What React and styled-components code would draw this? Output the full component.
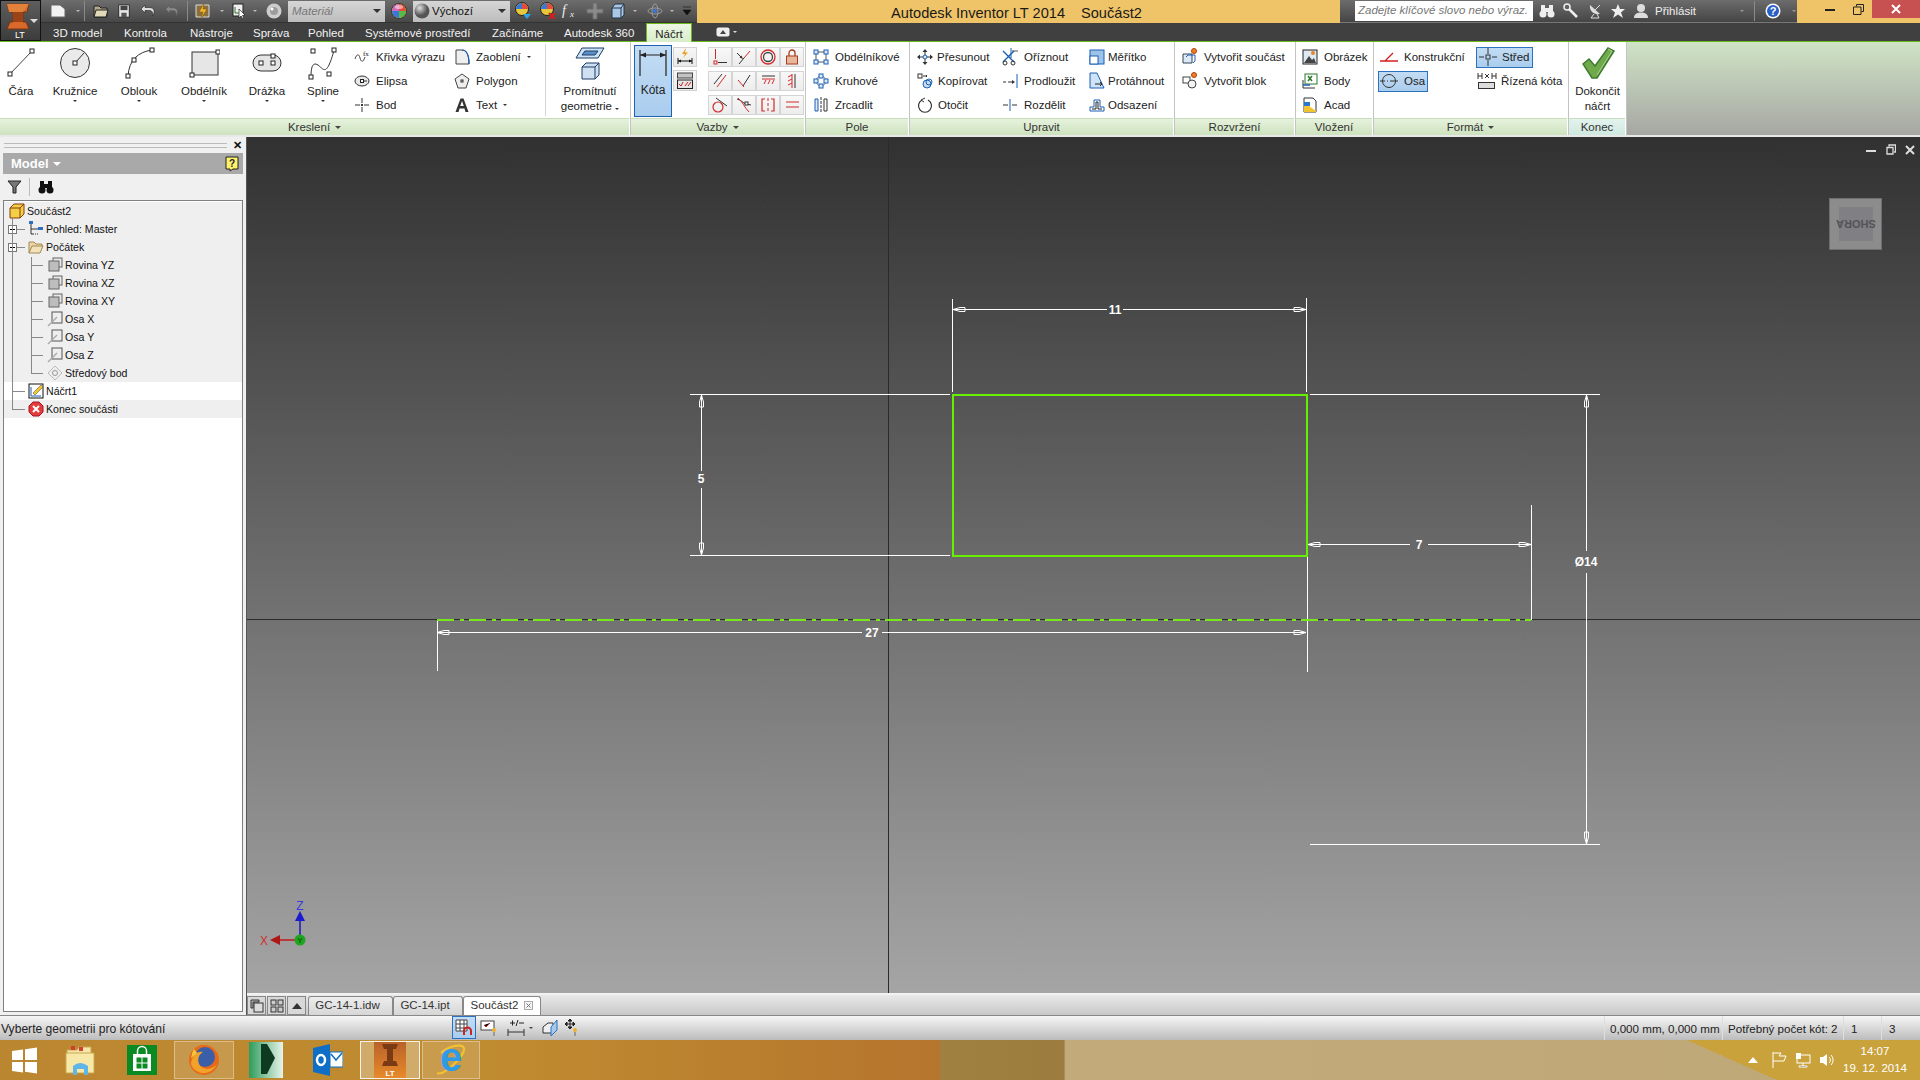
import React from 'react';
import styled, { createGlobalStyle } from 'styled-components';

const Global = createGlobalStyle`
  html, body { margin: 0; padding: 0; background: #404040; }
  * { box-sizing: border-box; }
`;
const F = `"Liberation Sans", Arial, sans-serif`;

const Root = styled.div`
  position: relative; width: 1920px; height: 1080px; overflow: hidden;
  display: flex; flex-direction: column;
  font: 11.5px ${F}; color: #222;
`;
const LogoBox = styled.div`
  position: absolute; left: 0; top: 0; width: 41px; height: 41px; z-index: 2;
  background: linear-gradient(#5e5e5e, #3c3c3c); border: 1px solid #111;
`;
const LogoText = styled.span`
  position: absolute; bottom: 0; left: 14px; color: #fff; font: 9px ${F};
`;
const LogoArrow = styled.span`
  position: absolute; left: 29px; top: 18px; width: 0; height: 0;
  border-left: 4px solid transparent; border-right: 4px solid transparent; border-top: 4px solid #ddd;
`;
const TitleRow = styled.div`
  height: 23px; display: flex; background: #efc468; padding-left: 41px;
`;
const Qat = styled.div`
  width: 656px; display: flex; align-items: center; padding-left: 4px;
  background: linear-gradient(#6d6d6d, #474747);
  border-bottom: 1px solid #333;
`;
const QItem = styled.div`
  width: ${p => p.$w || 24}px; height: 22px; flex: none;
  display: flex; align-items: center; justify-content: center;
`;
const QSep = styled.div`
  width: 1px; height: 20px; background: #8a8a8a; flex: none;
`;
const QCombo = styled.div`
  width: ${p => p.$w}px; height: 21px; flex: none; display: flex; align-items: center; gap: ${p => (p.$muted ? 3 : 2)}px;
  padding: 0 4px 0 ${p => (p.$muted ? 4 : 1)}px; background: linear-gradient(#d6d6d6, #bdbdbd);
  color: ${p => (p.$muted ? '#777' : '#111')}; font: ${p => (p.$muted ? 'italic' : 'normal')} 11.5px ${F};
`;
const ComboArrow = styled.span`
  margin-left: auto; width: 0; height: 0;
  border-left: 4px solid transparent; border-right: 4px solid transparent; border-top: 4px solid #333;
`;
const Caret = styled.span`
  display: inline-block; width: 0; height: 0; flex: none;
  border-left: ${p => p.$s || 2}px solid transparent; border-right: ${p => p.$s || 2}px solid transparent;
  border-top: ${p => p.$s || 2}px solid ${p => p.$c || '#333'};
`;
const AppTitle = styled.div`
  flex: 1; display: flex; justify-content: center; align-items: center; gap: 16px;
  font: 14.6px ${F}; color: #1a1a1a; padding: 2px 4px 0 0;
`;
const SearchBar = styled.div`
  width: 457px; display: flex; align-items: center; flex: none;
  background: linear-gradient(#6c6c6c, #454545);
  border-bottom: 1px solid #777;
`;
const SearchBox = styled.div`
  width: 178px; height: 20px; margin-left: 15px; background: #fff; flex: none;
  padding: 3px 3px; color: #777; font: italic 11.5px ${F}; white-space: nowrap; margin-right: 2px;
`;
const SignIn = styled.span` color: #eee; font: 11.5px ${F}; width: 82px; margin-left: 3px; `;
const WinControls = styled.div`
  width: 123px; display: flex; justify-content: flex-end; align-items: flex-start;
`;
const WinBtn = styled.div`
  width: ${p => p.$w}px; height: 18px; display: flex; align-items: center; justify-content: center;
  background: ${p => p.$bg || 'transparent'};
`;
const TabRow = styled.div`
  height: 19px; display: flex; align-items: center; padding-left: 53px; background: #404040;
  border-bottom: 1px solid #6ab81e;
`;
const MenuTab = styled.div`
  width: ${p => p.$w}px; color: ${p => (p.$active ? '#222' : '#f2f2f2')}; font: 11.5px ${F};
  height: 19px; line-height: 20px; flex: none;
  ${p => p.$active && `background: linear-gradient(#eef7e6, #d8edc9); text-align: center; margin-bottom: -1px; border: 1px solid #6ab81e; border-bottom: none;`}
`;
const TabExtra = styled.div`
  display: flex; align-items: center; gap: 3px; margin-left: 24px;
`;
const Ribbon = styled.div`
  height: 95px; display: flex; background: #fff; border-bottom: 2px solid #e8e8e8;
`;
const Group = styled.div`
  width: ${p => p.$w}px; flex: none; display: flex; flex-direction: column;
  border-right: 1px solid #c4c4c4;
`;
const GroupBody = styled.div`
  height: 76px; display: flex; padding-left: ${p => p.$pad || 0}px;
`;
const GroupLabel = styled.div`
  height: 17px; margin-right: 1px; display: flex; align-items: center; justify-content: center; gap: 5px;
  font: 11.5px ${F}; color: #333; border-top: 1px solid #c9dcbc;
  background: ${p => (p.$end ? 'linear-gradient(#e2f3ee, #cfe9df)' : 'linear-gradient(#e6f2dd, #cde2be)')};
`;
const RibbonRest = styled.div`
  flex: 1; background: linear-gradient(#cfe3c6, #a6a7a2);
`;
const Large = styled.div`
  width: ${p => p.$w}px; flex: none; display: flex; flex-direction: column; align-items: center;
  padding-top: 4px; text-align: center; font: 11.5px/15px ${F};
`;
const LargeIcon = styled.div`
  height: 34px; display: flex; align-items: center; justify-content: center; margin-bottom: 4px;
`;
const LargeCaret = styled(Caret)`
  margin-top: 1px;
`;
const Col = styled.div`
  width: ${p => p.$w}px; flex: none; padding-top: 3px; display: flex; flex-direction: column;
`;
const DrawCol = styled(Col)` margin-left: 4px; `;
const Small = styled.div`
  height: 24px; display: flex; align-items: center; gap: ${p => p.$gap ?? 6}px; white-space: nowrap;
`;
const SmallIcon = styled.span`
  width: ${p => p.$w || 16}px; height: 18px; flex: none; display: flex; align-items: center; justify-content: center;
`;
const Toggle = styled.div`
  width: ${p => p.$w}px; height: 21px; display: flex; align-items: center; gap: ${p => p.$gap}px;
  background: linear-gradient(#c3dcf3, #aacdee); border: 1px solid #2a72c0;
`;
const VSep = styled.div`
  width: 1px; height: 72px; margin-top: 2px; background: #d5d5d5; flex: none;
`;
const Kota = styled.div`
  width: 38px; height: 72px; margin: 3px 1px 0 3px; flex: none;
  background: linear-gradient(#c3dcf3, #aacdee); border: 1px solid #1f62b0;
  display: flex; flex-direction: column; align-items: center; padding-top: 4px;
`;
const KotaLabel = styled.span` margin-top: 7px; font: 12px ${F}; `;
const Stack = styled.div`
  width: 24px; flex: none; display: flex; flex-direction: column; gap: 3px; padding-top: 5px;
`;
const StackBtn = styled.div`
  height: ${p => p.$h}px; background: linear-gradient(#f7f7f7, #e9e9e9); border: 1px solid #d2d2d2;
  display: flex; align-items: center; justify-content: center;
`;
const ConstraintGrid = styled.div`
  margin-left: 11px; padding-top: 5px; display: grid;
  grid-template-columns: repeat(4, 24px); grid-auto-rows: 20px; row-gap: 4px;
`;
const Cell = styled.div`
  background: linear-gradient(#f8f8f8, #ececec); border: 1px solid #d4d4d4; display: flex; align-items: center; justify-content: center;
`;

const Work = styled.div`
  flex: 1; display: flex; min-height: 0; background: #e2e2e2;
`;
const Panel = styled.div`
  width: 247px; flex: none; background: #f0f0f0; padding: 0 3px 3px 3px;
  display: flex; flex-direction: column; border-right: 1px solid #555;
`;
const Grip = styled.div`
  height: 16px; display: flex; align-items: center; gap: 6px;
`;
const GripLines = styled.div`
  flex: 1; height: 5px; border-top: 1px solid #bbb; border-bottom: 1px solid #bbb; margin-left: 1px;
`;
const PanelClose = styled.span` font: bold 11px ${F}; color: #111; line-height: 10px; margin-right: 1px; `;
const PanelHead = styled.div`
  height: 21px; background: #a9a9a9; display: flex; align-items: center; gap: 4px; padding: 0 4px 0 8px;
  color: #fff; font: bold 13px ${F};
`;
const HelpTag = styled.span` margin-left: auto; display: flex; `;
const PanelTools = styled.div`
  height: 26px; display: flex; align-items: center; padding-left: 4px;
`;
const ToolSep = styled.div` width: 1px; height: 18px; background: #bbb; margin: 0 8px 0 7px; `;
const Tree = styled.div`
  position: relative; flex: 1; background: #fff; border: 1px solid #7f7f7f; padding-top: 1px;
`;
const TreeRow = styled.div`
  position: relative; height: 18px; display: flex; align-items: center; gap: 2px; z-index: 1;
  padding-left: ${p => 4 + p.$lvl * 19}px;
  background: ${p => (p.$white ? '#fff' : '#efefef')};
  font: 10.6px ${F}; color: #111; white-space: nowrap;
  ${p => p.$lvl > 0 && `&::before { content: ''; position: absolute; top: 9px; left: ${p.$lvl === 1 ? 8 : 27}px; width: ${p.$lvl === 1 ? 13 : 12}px; height: 1px; background: #888; }`}
`;
const TreeLines = styled.div`
  position: absolute; inset: 0; pointer-events: none; z-index: 2;
  &::before { content: ''; position: absolute; left: 8px; top: 17px; height: 191px; width: 1px; background: #888; }
  &::after { content: ''; position: absolute; left: 27px; top: 56px; height: 116px; width: 1px; background: #888; }
`;
const Plus = styled.span`
  position: absolute; left: 4px; top: 5px; width: 9px; height: 9px; background: #fff; border: 1px solid #777; z-index: 3;
  &::before { content: ''; position: absolute; left: 1px; top: 3px; width: 5px; height: 1px; background: #000; }
  ${p => p.$plus && `&::after { content: ''; position: absolute; left: 3px; top: 1px; width: 1px; height: 5px; background: #000; }`}
`;
const TreeIcon = styled.span`
  width: 17px; height: 17px; flex: none; display: flex; align-items: center; justify-content: center; position: relative; z-index: 3;
`;
const ViewCol = styled.div`
  flex: 1; display: flex; flex-direction: column; min-width: 0;
`;
const Canvas = styled.div`
  position: relative; height: 856px; background: linear-gradient(#313131, #a5a5a5);
`;
const Sketch = styled.svg`
  position: absolute; left: 0; top: 0; display: block;
`;
const DocControls = styled.div`
  position: absolute; right: 5px; top: 7px; display: flex; gap: 9px; align-items: center;
`;
const ViewCube = styled.div`
  position: absolute; right: 38px; top: 61px; width: 53px; height: 52px;
  background: #8c8c8c; border: 1px solid #6e6e6e; display: flex; align-items: center; justify-content: center;
`;
const CubeFace = styled.div`
  width: 34px; height: 34px; background: #7f7f84; display: flex; align-items: center; justify-content: center;
  transform: rotate(180deg); color: #545454; font: bold 11px ${F};
`;
const DocTabs = styled.div`
  height: 22px; display: flex; align-items: flex-end;
  background: linear-gradient(#e9e9e9, #c8c8c8); border-top: 2px solid #f2f2f2;
`;
const DocBtn = styled.div`
  width: 19px; height: 19px; margin-right: 1px; flex: none; display: flex; align-items: center; justify-content: center;
  border: 1px solid #888; background: #d8d8d8;
`;
const DocTab = styled.div`
  width: ${p => p.$w}px; height: 19px; flex: none; display: flex; align-items: center; justify-content: center; gap: 6px;
  padding: 0 ${p => (p.$active ? 0 : 6)}px 2px 0; margin-left: ${p => p.$ml || 0}px;
  font: 11.5px ${F}; color: #333; border: 1px solid #888; border-bottom: none;
  border-radius: 3px 3px 0 0;
  background: ${p => (p.$active ? '#fff' : 'linear-gradient(#eee, #d6d6d6)')};
`;
const StatusBar = styled.div`
  height: 25px; display: flex; align-items: stretch;
  background: linear-gradient(#f6f6f6, #bcbcbc); border-top: 1px solid #888;
`;
const StatusText = styled.div`
  width: 452px; flex: none; padding: 2px 0 0 1px; display: flex; align-items: center; font: 12.1px ${F}; color: #222;
`;
const StatusIcon = styled.div`
  width: ${p => p.$w || 24}px; flex: none; height: 23px; display: flex; align-items: center; justify-content: center; gap: 2px;
  ${p => p.$on && 'background: linear-gradient(#c3dcf3, #aacdee); border: 1px solid #2a72c0;'}
`;
const Field = styled.div`
  width: ${p => p.$w}px; flex: none; display: flex; align-items: center; padding-left: ${p => p.$pad || 5}px;
  border-left: 1px solid #dedede; font: 11.6px ${F}; color: #222; white-space: nowrap;
  ${p => p.$first && 'margin-left: auto;'}
`;
const Taskbar = styled.div`
  height: 40px; display: flex; align-items: stretch; gap: 2px;
  background:
    linear-gradient(24deg, transparent 88.4%, #c9a23c 88.4%),
    linear-gradient(90deg, #bb8630 0, #c08c30 25%, #b5752d 48.9%, #a08040 49%, #9c7d3f 55.4%, #c2aa7a 55.5%, #bfa878 100%);
`;
const TaskCell = styled.div`
  width: ${p => p.$w || 60}px; flex: none; margin: 1px 0; display: flex; align-items: center; justify-content: center;
  ${p => p.$hl && 'background: rgba(255,255,255,.14); border: 1px solid rgba(255,255,255,.35);'}
  ${p => p.$active && 'background: rgba(255,255,255,.28); border: 1px solid rgba(255,255,255,.85);'}
`;
const Tray = styled.div`
  margin-left: auto; display: flex; align-items: center; gap: 8px; padding-right: 10px;
`;
const Clock = styled.div`
  width: 70px; margin-left: -3px; text-align: center; color: #fff; font: 11.5px/17px ${F};
`;
const InvBadge = styled.div`
  position: relative; width: 32px; height: 36px; background: linear-gradient(#b8622a, #e88a2a);
  display: flex; justify-content: center;
`;
const InvLT = styled.span` position: absolute; bottom: 0; color: #fff; font: bold 8px ${F}; `;
const IE = styled.span`
  position: relative; width: 34px; height: 34px; display: flex; align-items: center; justify-content: center;
  color: #2f9be6; font: bold 40px/30px ${F}; padding-bottom: 6px;
`;
const IERing = styled.svg` position: absolute; left: 0; top: 0; `;
const IELetter = styled.span` position: relative; `;

const H = ({ x, y }) => <rect x={x - 2} y={y - 2} width="4" height="4" fill="#fff" stroke="#222" />;
const S = ({ w = 16, h = 16, children }) => <svg width={w} height={h} viewBox={`0 0 ${w} ${h}`} fill="none">{children}</svg>;

/* ---------- Large ribbon icons ---------- */
const ILine = () => <S w={30} h={30}><path d="M4 26L26 3" stroke="#444" /><H x={4} y={26} /><H x={26} y={3} /></S>;
const ICircle = () => <S w={32} h={32}><circle cx="16" cy="16" r="14.5" fill="#eaeaea" stroke="#333" /><path d="M16 16L25 6" stroke="#333" /><H x={16} y={16} /></S>;
const IArc = () => <S w={32} h={32}><path d="M5 29C6 13 15 5 29 3" stroke="#333" /><H x={5} y={29} /><H x={11} y={13} /><H x={29} y={3} /></S>;
const IRect = () => <S w={32} h={30}><rect x="4" y="4" width="26" height="23" fill="#e6e6e6" stroke="#333" /><H x={30} y={4} /><H x={4} y={27} /></S>;
const ISlot = () => <S w={32} h={22}><rect x="2" y="3" width="28" height="16" rx="8" fill="#e4e4e4" stroke="#333" /><H x={10} y={11} /><H x={22} y={11} /><H x={22} y={4} /></S>;
const ISpline = () => <S w={32} h={34}><path d="M4 31C4 20 6 16 11 19C16 23 18 27 22 19C25 12 26 8 27 4" stroke="#333" /><H x={4} y={31} /><H x={6} y={5} /><H x={22} y={28} /><H x={27} y={4} /></S>;
const IProject = () => <S w={34} h={36}><path d="M9 3H31L25 13H3Z" fill="#cfe3f6" stroke="#1d3d66" /><path d="M12 6H25L22 10H9Z" fill="#5d90c8" stroke="#1d3d66" /><path d="M9 22l4-4h13v12l-4 4H9Z" fill="#cfe0f0" stroke="#1d3d66" /><path d="M9 22h13v12M22 22l4-4" stroke="#1d3d66" /></S>;
const IKota = () => <S w={30} h={26}><path d="M2 0V26M28 0V26" stroke="#222" strokeWidth="1.2" /><path d="M2 5H28" stroke="#222" /><path d="M2 5l6-2.500v5zM28 5l-6-2.500v5z" fill="#222" /></S>;
const ICheck = () => <S w={36} h={34}><path d="M3 18L9 13L15 20L28 2L34 5L17 32H12Z" fill="#70a84c" stroke="#3f7a32" strokeWidth="1.5" /><path d="M28 3L32 5L17 29" stroke="#a8d48c" /></S>;

/* ---------- Small ribbon icons ---------- */
const IEq = () => <S><path d="M1 10C3 4 5 5 6 9C7 13 9 14 11 8" stroke="#444" /><text x="9" y="7" fontSize="7" fontFamily="Liberation Serif" fill="#222">fx</text></S>;
const IEllipse = () => <S><ellipse cx="8" cy="8" rx="7" ry="5" fill="#e8e8e8" stroke="#333" /><path d="M8 8h5" stroke="#333" /><rect x="6.5" y="6.5" width="3" height="3" fill="#fff" stroke="#222" /></S>;
const IPoint = () => <S><path d="M8 1V6M8 10V15M1 8H6M10 8H15" stroke="#333" /><rect x="7" y="7" width="2" height="2" fill="#333" /></S>;
const IFillet = () => <S h={18}><path d="M2 2H8C12 2 15 6 15 16H2Z" fill="#efefef" stroke="#444" /><path d="M8 2C12 2 15 6 15 16" stroke="#1a5fb4" strokeWidth="1.2" /></S>;
const IPoly = () => <S><path d="M8 1L15 6L12 15H4L1 6Z" fill="#eee" stroke="#444" /><rect x="7" y="7" width="2" height="2" stroke="#333" /></S>;
const IText = () => <S><path d="M1.5 15L6.5 1.5h3L14.5 15h-3l-1-3.5h-5L4.500 15ZM6.200 9h3.600L8 4Z" fill="#333" /></S>;
const IPatRect = () => <S><path d="M4 3H12M3 4V12M13 4V12M4 13H12" stroke="#555" /><g fill="#dce9f6" stroke="#1a5fb4"><rect x="1" y="1" width="4" height="4" /><rect x="11" y="1" width="4" height="4" /><rect x="1" y="11" width="4" height="4" /><rect x="11" y="11" width="4" height="4" /></g></S>;
const IPatCirc = () => <S><circle cx="8" cy="8" r="5" stroke="#888" /><g fill="#dce9f6" stroke="#1a5fb4"><rect x="6" y="1" width="4" height="4" /><rect x="1" y="6" width="4" height="4" /><rect x="11" y="6" width="4" height="4" /><rect x="6" y="11" width="4" height="4" /></g></S>;
const IMirror = () => <S><path d="M8 0V16" stroke="#333" strokeDasharray="3 1" /><path d="M2 2H5V14H2Z" fill="#dce9f6" stroke="#1a5fb4" /><path d="M11 2H14V14H11Z" stroke="#333" /></S>;
const IMove = () => <S><path d="M8 1V15M1 8H15" stroke="#333" /><path d="M8 0l2.500 3h-5zM8 16l2.500-3h-5zM0 8l3-2.500v5zM16 8l-3-2.500v5z" fill="#333" /><circle cx="8" cy="8" r="2" fill="#dce9f6" stroke="#1a5fb4" /></S>;
const ICopy = () => <S><circle cx="10" cy="11" r="4" fill="#c9def3" stroke="#1a5fb4" /><circle cx="12" cy="9" r="3" stroke="#1a5fb4" /><rect x="1" y="1" width="4" height="4" fill="#fff" stroke="#333" /><path d="M6 3h4l-1-1M10 3l-1 1" stroke="#333" /></S>;
const IRotate = () => <S><path d="M5 3A6.500 6.500 0 1 0 11 3" stroke="#333" strokeWidth="1.2" /><path d="M8 1L4 3l3 2" stroke="#333" /></S>;
const ITrim = () => <S h={18}><path d="M1 3L12 14M12 3L1 14" stroke="#1a5fb4" strokeWidth="1.4" /><path d="M9 0V10" stroke="#1a5fb4" /><circle cx="3" cy="15" r="2" stroke="#333" /><circle cx="11" cy="15" r="2" stroke="#333" /><path d="M10 3H16" stroke="#555" /></S>;
const IExtend = () => <S><path d="M1 9H4M6 9H10" stroke="#333" /><path d="M10 7l3 2-3 2z" fill="#333" /><path d="M15 1V15" stroke="#1a5fb4" /></S>;
const ISplit = () => <S><path d="M1 8H6M10 8H15" stroke="#333" /><path d="M8 2V14" stroke="#1a5fb4" /></S>;
const IScale = () => <S h={18}><rect x="1" y="2" width="14" height="14" fill="#9dc3e9" stroke="#1a5fb4" /><rect x="1" y="8" width="8" height="8" fill="#fff" stroke="#1a5fb4" /></S>;
const IStretch = () => <S h={18}><path d="M1 1H8L15 16H1Z" fill="#cfe3f6" stroke="#1a5fb4" /><path d="M6 12H13M11 10l2 2-2 2" stroke="#222" /></S>;
const IOffset = () => <S><path d="M1 14V10H5V3H11V10H15V14Z" stroke="#1a5fb4" /><path d="M3 12H7V5H9V12H13" stroke="#222" /></S>;
const ICreatePart = () => <S h={18}><path d="M1 6H10V15H1Z" fill="#dce9f6" stroke="#345" /><path d="M4 9l2-2h7v6l-2 2" stroke="#1a5fb4" /><circle cx="12" cy="3" r="2.500" fill="#f08020" stroke="#b04010" /></S>;
const ICreateBlock = () => <S h={18}><rect x="1" y="5" width="7" height="6" stroke="#444" /><circle cx="10" cy="12" r="4" fill="#f3f3f3" stroke="#444" /><circle cx="12" cy="3" r="2.500" fill="#f08020" stroke="#b04010" /></S>;
const IImage = () => <S><rect x="1" y="1" width="14" height="14" fill="#dfe9f2" stroke="#222" /><path d="M2 14L7 7L10 11L12 9L14 14Z" fill="#444" /><circle cx="11" cy="4" r="2" fill="#e8832a" /></S>;
const IPoints = () => <S><rect x="3" y="1" width="12" height="10" fill="#fff" stroke="#2a7a2a" /><path d="M6 3l4 5M10 3l-4 5" stroke="#2a7a2a" strokeWidth="1.5" /><path d="M1 7V15H13" stroke="#333" /><path d="M1 12H8" stroke="#1a5fb4" strokeWidth="1.5" /></S>;
const IAcad = () => <S><path d="M2 1H11L14 4V15H2Z" fill="#fff" stroke="#333" /><path d="M2 15V9H7L14 14V15Z" fill="#f2c530" /><rect x="2" y="5" width="6" height="4" fill="#2a78c8" /></S>;
const IConstr = () => <S w={20} h={12}><path d="M1 10H19M6 10L14 2" stroke="#d41f1f" strokeWidth="1.3" /></S>;
const IOsa = () => <S w={20} h={16}><circle cx="10" cy="8" r="6.500" stroke="#333" /><path d="M1 8H6M8 8H9M11 8H19" stroke="#333" /></S>;
const ICenter = () => <S w={20} h={18}><path d="M10 0V6M10 12V18M1 9H6M14 9H19" stroke="#333" /><rect x="8" y="7" width="4" height="4" stroke="#333" /></S>;
const IDriven = () => <S w={20} h={18}><path d="M1 1V7M5 1V7M1 4H5M15 1V7M19 1V7M15 4H19M8 2L12 6M12 2L8 6" stroke="#333" /><rect x="1.500" y="10.500" width="16" height="6" fill="#ddd" stroke="#333" /></S>;
const IAutoDim = () => <S w={18} h={18}><path d="M10 0L6 6H9L7 10L12 4.500H9Z" fill="#e9a020" /><path d="M2 10V16M16 10V16M2 13H16" stroke="#111" /><path d="M2 13l3-1.500v3zM16 13l-3-1.500v3z" fill="#111" /></S>;
const IForms = () => <S w={18} h={18}><rect x="1.500" y="1" width="15" height="5" fill="#c4c4c4" stroke="#444" /><rect x="1.500" y="8" width="15" height="8.500" fill="#e4e4e4" stroke="#222" /><path d="M3 12l2 2 2-4M9 14l3-4M12 14l3-4" stroke="#c22" /></S>;

/* constraint glyphs */
const R = '#d12a2a';
const K = '#333';
const Cons = [
  <g><path d="M3.500 0V10" stroke={R} /><rect x="2" y="12" width="3" height="3" stroke={R} /><path d="M6 13.500H15" stroke={K} /></g>,
  <g><path d="M14 2L8 9" stroke={R} /><path d="M8 9L3 15" stroke={K} /><path d="M1 4L6 9" stroke={K} /><path d="M7 10L3.500 8.500L5.500 6.500Z" fill={K} /></g>,
  <g><circle cx="8" cy="8" r="7" stroke={R} strokeWidth="1.300" /><circle cx="8" cy="8" r="4.500" stroke="#444" strokeWidth="1.300" /></g>,
  <g><rect x="2.500" y="7" width="11" height="8" fill="#e8b79a" stroke="#a83a20" /><path d="M5 7V4a3 3 0 0 1 6 0V7" stroke="#a83a20" strokeWidth="1.300" /></g>,
  <g><path d="M2 11L10 1" stroke={K} /><path d="M5 14L14 2" stroke={R} /></g>,
  <g><path d="M14 2L7 13" stroke={K} /><path d="M2 7L8 14" stroke={R} /></g>,
  <g><path d="M2 3H15" stroke={K} /><path d="M2 6H15" stroke={R} /><path d="M4 11l2-4M8 11l2-4M12 11l2-4" stroke={R} /></g>,
  <g><path d="M11 1V15" stroke={K} /><path d="M8 1V15" stroke={R} /><path d="M4 4l4-2M4 8l4-2M4 12l4-2" stroke={R} /></g>,
  <g><circle cx="6" cy="10" r="5" stroke={R} strokeWidth="1.200" /><path d="M4 1L15 9" stroke={K} /></g>,
  <g><path d="M1 2C5 3 7 6 10 7L15 8" stroke={K} /><path d="M2 1C7 5 8 10 13 15" stroke={R} /><rect x="9" y="5" width="3" height="3" fill="#fff" stroke={K} /></g>,
  <g><path d="M5 2H2V14H5M11 2H14V14H11" stroke={R} strokeWidth="1.200" /><path d="M8 1V15" stroke={R} strokeDasharray="3 2" /></g>,
  <path d="M2 5H15M2 10H15" stroke={R} strokeWidth="1.200" />,
];

/* ---------- QAT icons ---------- */
const QNew = () => <S><path d="M1 2H10L15 6V14H1Z" fill="#f2f2f2" stroke="#666" /></S>;
const QOpen = () => <S><path d="M1 3H6L8 5H14V14H1Z" fill="#b4a98a" stroke="#222" /><path d="M3 7H15L13 14H1Z" fill="#e2d9b8" stroke="#222" /></S>;
const QSave = () => <S><rect x="2" y="1" width="12" height="14" fill="#e6e6e6" stroke="#222" /><rect x="4" y="2" width="8" height="5" fill="#444" /><rect x="5" y="10" width="6" height="5" fill="#555" /></S>;
const QUndo = ({ dim }) => <S><path d="M5 2L1 6L5 10V7.500H9C12 7.500 13 9 13 13C15 9 15 4.500 9 4.500H5Z" fill={dim ? '#8a8a8a' : '#ddd'} stroke={dim ? '#666' : '#222'} strokeWidth=".6" /></S>;
const QUpd = () => <S><path d="M1 2H14V14H1Z" fill="#8a6f3e" stroke="#ddd" /><path d="M9 0L4 9H8L6 16L12 6H8Z" fill="#f2b72a" stroke="#8a5a10" strokeWidth=".6" /></S>;
const QSel = () => <S><rect x="1" y="1" width="10" height="12" fill="#eee" stroke="#222" /><path d="M7 6L7 15L9 13L11 16L12 15L10.500 12.500L13 12Z" fill="#fff" stroke="#222" strokeWidth=".7" /><path d="M3 4V10H7" stroke="#2a7a2a" /></S>;
const QSphere = () => <S><circle cx="8" cy="8" r="7.500" fill="#cdcdcd" /><circle cx="8" cy="8" r="4" fill="#888" opacity=".7" /><circle cx="6" cy="6" r="1.500" fill="#fff" /></S>;
const QWheel = () => <S><circle cx="8" cy="8" r="7.500" fill="#e8c83a" stroke="#333" /><path d="M8 8V1A7 7 0 0 1 15 8Z" fill="#e84a3a" /><path d="M8 8H1A7 7 0 0 1 8 1Z" fill="#d068c0" /><path d="M8 8V15A7 7 0 0 1 1 8Z" fill="#3a78d8" /><path d="M8 8H15A7 7 0 0 1 8 15Z" fill="#58b848" /><ellipse cx="8" cy="4" rx="4" ry="2" fill="#fff" opacity=".5" /></S>;
const QGrey = () => <S><defs><radialGradient id="gs" cx=".35" cy=".3"><stop offset="0" stopColor="#e0e0e0" /><stop offset="1" stopColor="#555" /></radialGradient></defs><circle cx="8" cy="8" r="7.500" fill="url(#gs)" /></S>;
const QColorA = () => <S w={18} h={18}><circle cx="8" cy="7" r="6.500" fill="#e8c83a" stroke="#222" /><path d="M8 7V1A6 6 0 0 1 14 7Z" fill="#e84a3a" /><path d="M8 7H2A6 6 0 0 1 8 1Z" fill="#3a78d8" /><path d="M9 12h8l-4 5z" fill="#2aa3e8" /></S>;
const QColorB = () => <S w={18} h={18}><circle cx="8" cy="7" r="6.500" fill="#e8c83a" stroke="#222" /><path d="M8 7V1A6 6 0 0 1 14 7Z" fill="#e84a3a" /><path d="M8 7H2A6 6 0 0 1 8 1Z" fill="#3a78d8" /><path d="M10 11l6 6M16 11l-6 6" stroke="#d41f1f" strokeWidth="2" /></S>;
const QFx = () => <svg width="20" height="18"><text x="2" y="13" fontFamily="Liberation Serif" fontStyle="italic" fontSize="14" fill="#eee">f</text><text x="10" y="15" fontFamily="Liberation Serif" fontStyle="italic" fontSize="9" fill="#eee">x</text></svg>;
const QPlus = () => <S w={18} h={18}><path d="M7 1H11V7H17V11H11V17H7V11H1V7H7Z" fill="#8a8a8a" stroke="#6a6a6a" /></S>;
const QBox = () => <S><path d="M2 5L5 1H14V12L11 15H2Z" fill="#a9c8e6" stroke="#234" /><path d="M2 5H11V15M11 5L14 1" stroke="#234" /></S>;
const Q3d = () => <S><ellipse cx="8" cy="8" rx="7" ry="3" stroke="#9a9a9a" /><ellipse cx="8" cy="8" rx="3" ry="7" stroke="#9a9a9a" /><circle cx="8" cy="8" r="2" fill="#3a78d8" /></S>;
const QMore = () => <S w={10} h={10}><path d="M1 1H9M1 4H9L5 9Z" fill="#111" stroke="#111" strokeWidth=".6" /></S>;
const QTri = ({ c = '#bbb' }) => <Caret $s={2.5} $c={c} />;

const IBino = ({ c = '#eee' }) => <S><circle cx="4" cy="11" r="3.500" fill={c} /><circle cx="12" cy="11" r="3.500" fill={c} /><rect x="2" y="2" width="4" height="8" fill={c} /><rect x="10" y="2" width="4" height="8" fill={c} /><rect x="6" y="5" width="4" height="4" fill={c} /></S>;
const IKey = () => <S><circle cx="4" cy="4" r="3" stroke="#eee" strokeWidth="1.5" /><path d="M6 6L14 14" stroke="#eee" strokeWidth="2.500" /></S>;
const ISat = () => <S><path d="M3 2C2 8 7 12 13 11Z" fill="#ddd" /><path d="M7 11L4 15H12L10 11" stroke="#ddd" /><path d="M8 7L13 2" stroke="#ddd" /></S>;
const IStar = () => <S><path d="M8 1L10 6H15L11 9.500L13 15L8 11.500L3 15L5 9.500L1 6H6Z" fill="#eee" /></S>;
const IUser = () => <S><circle cx="8" cy="5" r="4" fill="#ddd" /><path d="M1 15C1 11 4 9.500 8 9.500S15 11 15 15Z" fill="#ddd" /></S>;
const IHelp = () => <svg width="16" height="16"><circle cx="8" cy="8" r="7.500" fill="#fff" /><circle cx="8" cy="8" r="6" fill="#2a5fc8" /><text x="8" y="12" textAnchor="middle" fontFamily="Liberation Sans" fontWeight="bold" fontSize="11" fill="#fff">?</text></svg>;

/* ---------- Tree icons ---------- */
const TCube = () => <S><path d="M1 5L5 1H15V11L11 15H1Z" fill="#f3cf45" stroke="#8a3a10" /><path d="M1 5H11V15M11 5L15 1" stroke="#8a3a10" /></S>;
const TView = () => <S><path d="M3 2V13H6M3 8H10" stroke="#333" /><rect x="1" y="0" width="4" height="3" fill="#2a6fc0" /><rect x="10" y="6" width="5" height="3" fill="#2a6fc0" /><path d="M7 13H10" stroke="#333" strokeDasharray="1 1" /></S>;
const TFolder = () => <S><path d="M1 14V3H6L8 5H14V8" fill="#e8d6aa" stroke="#a58a52" /><path d="M1 14L4 7H15L12 14Z" fill="#f1e2bc" stroke="#a58a52" /></S>;
const TPlane = () => <S><rect x="6" y="1" width="9" height="9" stroke="#666" fill="#e8e8e8" /><rect x="2" y="4" width="10" height="10" fill="#bdbdbd" stroke="#666" /></S>;
const TAxis = () => <S><rect x="5" y="1" width="10" height="11" fill="#eee" stroke="#555" /><path d="M1 15L10 6" stroke="#aaa" strokeWidth="1.5" /></S>;
const TPoint = () => <S><path d="M8 1L15 8L8 15L1 8Z" fill="#eee" stroke="#bbb" /><circle cx="8" cy="8" r="2.500" stroke="#999" /></S>;
const TSketch = () => <S><rect x="1" y="1" width="14" height="14" fill="#fff" stroke="#111" /><path d="M3 4V13H13" stroke="#1a5fb4" /><path d="M5 10L13 2L15 4L7 12Z" fill="#f2c530" stroke="#444" strokeWidth=".5" /></S>;
const TEnd = () => <S><path d="M5 1H11L15 5V11L11 15H5L1 11V5Z" fill="#e23c3c" stroke="#a12" /><path d="M5 5L11 11M11 5L5 11" stroke="#fff" strokeWidth="2" /></S>;

const Arrow = ({ d }) => <path d={d} fill="none" stroke="#fff" />;

const DrawSketch = () => (
  <Sketch width="1673" height="856" viewBox="247 137 1673 856">
    <path d="M247 619.500H1920M888.500 137V993" stroke="#2a2a2a" strokeWidth="1" />
    <g stroke="#fff" strokeWidth="1" fill="none" shapeRendering="crispEdges">
      <path d="M952.500 299V392M1306.500 298V392" />
      <path d="M953 309.500H1107M1123 309.500H1306" />
      <path d="M690 394.500H950M1310 394.500H1600M690 555.500H950" />
      <path d="M701.500 395V471M701.500 488V555" />
      <path d="M1307 505V672" />
      <path d="M1307 544.500H1410M1428 544.500H1531" />
      <path d="M1531.500 505V620" />
      <path d="M437.500 620V671" />
      <path d="M437 632.500H862M882 632.500H1306" />
      <path d="M1586.500 395V551M1586.500 573V844" />
      <path d="M1310 844.500H1600" />
    </g>
    <Arrow d="M953 309.500L960 307.500H965V311.500H960ZM1306 309.500L1299 307.500H1294V311.500H1299Z" />
    <Arrow d="M701.500 395L699.500 402V407H703.500V402ZM701.500 555L699.500 548V543H703.500V548Z" />
    <Arrow d="M1308 544.500L1315 542.500H1320V546.500H1315ZM1531 544.500L1524 542.500H1519V546.500H1524Z" />
    <Arrow d="M437 632.500L444 630.500H449V634.500H444ZM1306 632.500L1299 630.500H1294V634.500H1299Z" />
    <Arrow d="M1586.500 395L1584.500 402V407H1588.500V402ZM1586.500 844L1584.500 837V832H1588.500V837Z" />
    <rect x="953" y="395" width="354" height="161" fill="none" stroke="#66f000" strokeWidth="2" />
    <path d="M437 620H1531" stroke="#78e81a" strokeWidth="2" strokeDasharray="17 6 4 5" shapeRendering="crispEdges" />
    <g fill="#fff" fontFamily="Liberation Sans" fontWeight="bold" fontSize="12" textAnchor="middle">
      <text x="1115" y="314">11</text>
      <text x="701" y="483">5</text>
      <text x="1419" y="549">7</text>
      <text x="872" y="637">27</text>
      <text x="1586" y="566">Ø14</text>
    </g>
    <path d="M300 940V918" stroke="#1a1ac0" strokeWidth="1.500" />
    <path d="M300 911L295 921H305Z" fill="#1a1ad0" />
    <path d="M300 940H278" stroke="#c01a1a" strokeWidth="1.500" />
    <path d="M270 940L280 935V945Z" fill="#b01818" />
    <circle cx="300" cy="940" r="5.500" fill="#1fa51f" />
    <text x="300" y="943" textAnchor="middle" fill="#0f6a0f" fontFamily="Liberation Sans" fontWeight="bold" fontSize="8">Y</text>
    <text x="300" y="910" textAnchor="middle" fill="#3a3ae0" fontFamily="Liberation Sans" fontSize="12">Z</text>
    <text x="264" y="945" textAnchor="middle" fill="#d03030" fontFamily="Liberation Sans" fontSize="12">X</text>
  </Sketch>
);

const QatBar = () => (
  <Qat>
    <QItem $w={26}><QNew /></QItem><QItem $w={13}><QTri /></QItem><QSep />
    <QItem $w={32}><QOpen /></QItem><QItem $w={14}><QSave /></QItem><QItem $w={34}><QUndo /></QItem><QItem $w={14}><QUndo dim /></QItem>
    <QItem $w={8} /><QSep />
    <QItem $w={30}><QUpd /></QItem><QItem $w={8}><QTri /></QItem>
    <QItem $w={3} /><QItem $w={22}><QSel /></QItem><QItem $w={8}><QTri /></QItem>
    <QItem $w={29}><QSphere /></QItem>
    <QCombo $w={97} $muted>Materiál<ComboArrow /></QCombo>
    <QItem $w={28}><QWheel /></QItem>
    <QCombo $w={97}><QGrey />Výchozí<ComboArrow /></QCombo>
    <QItem $w={25}><QColorA /></QItem><QItem $w={25}><QColorB /></QItem><QItem $w={20}><QFx /></QItem>
    <QItem $w={3} /><QItem $w={24}><QPlus /></QItem>
    <QItem $w={22}><QBox /></QItem><QItem $w={12}><QTri /></QItem><QItem $w={3} /><QItem $w={22}><Q3d /></QItem><QItem $w={12}><QTri /></QItem><QItem $w={2} /><QItem $w={14}><QMore /></QItem>
  </Qat>
);

const tabs = [['3D model', 71], ['Kontrola', 66], ['Nástroje', 63], ['Správa', 55], ['Pohled', 57], ['Systémové prostředí', 127], ['Začínáme', 72], ['Autodesk 360', 82]];

const LargeTool = ({ w, icon, children, caret }) => (
  <Large $w={w}><LargeIcon>{icon}</LargeIcon><span>{children}</span>{caret && <LargeCaret />}</Large>
);
const Tool = ({ icon, children, caret, iconW, gap }) => (
  <Small $gap={gap}><SmallIcon $w={iconW}>{icon}</SmallIcon>{children}{caret && <Caret />}</Small>
);
const Label = ({ children, caret, end }) => <GroupLabel $end={end}>{children}{caret && <Caret $s={3.5} $c="#444" />}</GroupLabel>;

const treeRows = [
  [2, <TPlane />, 'Rovina YZ'], [2, <TPlane />, 'Rovina XZ'], [2, <TPlane />, 'Rovina XY'],
  [2, <TAxis />, 'Osa X'], [2, <TAxis />, 'Osa Y'], [2, <TAxis />, 'Osa Z'], [2, <TPoint />, 'Středový bod'],
];

export default function App() {
  return (
    <Root>
      <Global />
      <LogoBox>
        <svg width="30" height="30" viewBox="0 0 30 30"><path d="M6 3H28L26 11H22V21H25L28 28H6L9 21H12V11H8Z" fill="#d9692a" stroke="#7a3610" /><path d="M12 11H22V21H12Z" fill="#9b4216" /><path d="M6 3L8 11H22L28 3Z" fill="#e2813a" /></svg>
        <LogoArrow />
        <LogoText>LT</LogoText>
      </LogoBox>
      <TitleRow>
        <QatBar />
        <AppTitle><span>Autodesk Inventor LT 2014</span><span>Součást2</span></AppTitle>
        <SearchBar>
          <SearchBox>Zadejte klíčové slovo nebo výraz.</SearchBox>
          <QItem $w={24}><IBino /></QItem><QItem $w={24}><IKey /></QItem><QItem $w={23}><ISat /></QItem><QItem $w={24}><IStar /></QItem><QItem $w={22}><IUser /></QItem>
          <SignIn>Přihlásit</SignIn>
          <QItem $w={10}><QTri c="#999" /></QItem><QItem $w={7} /><QSep />
          <QItem $w={36}><IHelp /></QItem><QItem $w={6}><QTri c="#999" /></QItem>
        </SearchBar>
        <WinControls>
          <WinBtn $w={28}><svg width="10" height="10"><path d="M0 6H10" stroke="#222" strokeWidth="2" /></svg></WinBtn>
          <WinBtn $w={28}><svg width="11" height="11"><path d="M3.500 2.500V.5H10.500V7.500H8.500M.5 3H8V10.500H.5Z" stroke="#222" fill="none" /></svg></WinBtn>
          <WinBtn $w={48} $bg="#c75050"><svg width="10" height="10"><path d="M1 1L9 9M9 1L1 9" stroke="#fff" strokeWidth="2" /></svg></WinBtn>
        </WinControls>
      </TitleRow>
      <TabRow>
        {tabs.map(([t, w]) => <MenuTab key={t} $w={w}>{t}</MenuTab>)}
        <MenuTab $w={46} $active>Náčrt</MenuTab>
        <TabExtra>
          <svg width="14" height="10"><rect x=".5" y=".5" width="13" height="9" rx="2" fill="#eee" /><path d="M7 3l3 4H4z" fill="#444" /></svg>
          <Caret $s={2.5} $c="#ddd" />
        </TabExtra>
      </TabRow>
      <Ribbon>
        <Group $w={631}>
          <GroupBody>
            <LargeTool w={42} icon={<ILine />}>Čára</LargeTool>
            <LargeTool w={66} icon={<ICircle />} caret>Kružnice</LargeTool>
            <LargeTool w={62} icon={<IArc />} caret>Oblouk</LargeTool>
            <LargeTool w={68} icon={<IRect />} caret>Obdélník</LargeTool>
            <LargeTool w={58} icon={<ISlot />} caret>Drážka</LargeTool>
            <LargeTool w={54} icon={<ISpline />} caret>Spline</LargeTool>
            <DrawCol $w={100}>
              <Tool icon={<IEq />}>Křivka výrazu</Tool>
              <Tool icon={<IEllipse />}>Elipsa</Tool>
              <Tool icon={<IPoint />}>Bod</Tool>
            </DrawCol>
            <Col $w={91}>
              <Tool icon={<IFillet />} caret>Zaoblení</Tool>
              <Tool icon={<IPoly />}>Polygon</Tool>
              <Tool icon={<IText />} caret>Text</Tool>
            </Col>
            <VSep />
            <LargeTool w={88} icon={<IProject />}>Promítnutí<br />geometrie <Caret /></LargeTool>
          </GroupBody>
          <Label caret>Kreslení</Label>
        </Group>
        <Group $w={175}>
          <GroupBody>
            <Kota><IKota /><KotaLabel>Kóta</KotaLabel></Kota>
            <Stack>
              <StackBtn $h={20}><IAutoDim /></StackBtn>
              <StackBtn $h={21}><IForms /></StackBtn>
            </Stack>
            <ConstraintGrid>
              {Cons.map((g, i) => <Cell key={i}><S>{g}</S></Cell>)}
            </ConstraintGrid>
          </GroupBody>
          <Label caret>Vazby</Label>
        </Group>
        <Group $w={104}>
          <GroupBody $pad={7}>
            <Col $w={96}>
              <Tool icon={<IPatRect />}>Obdélníkové</Tool>
              <Tool icon={<IPatCirc />}>Kruhové</Tool>
              <Tool icon={<IMirror />}>Zrcadlit</Tool>
            </Col>
          </GroupBody>
          <Label>Pole</Label>
        </Group>
        <Group $w={265}>
          <GroupBody $pad={7}>
            <Col $w={85}>
              <Tool icon={<IMove />} gap={4}>Přesunout</Tool>
              <Tool icon={<ICopy />} gap={5}>Kopírovat</Tool>
              <Tool icon={<IRotate />} gap={5}>Otočit</Tool>
            </Col>
            <Col $w={87}>
              <Tool icon={<ITrim />}>Oříznout</Tool>
              <Tool icon={<IExtend />}>Prodloužit</Tool>
              <Tool icon={<ISplit />}>Rozdělit</Tool>
            </Col>
            <Col $w={84}>
              <Tool icon={<IScale />} gap={3}>Měřítko</Tool>
              <Tool icon={<IStretch />} gap={3}>Protáhnout</Tool>
              <Tool icon={<IOffset />} gap={3}>Odsazení</Tool>
            </Col>
          </GroupBody>
          <Label>Upravit</Label>
        </Group>
        <Group $w={121}>
          <GroupBody $pad={7}>
            <Col $w={112}>
              <Tool icon={<ICreatePart />}>Vytvořit součást</Tool>
              <Tool icon={<ICreateBlock />}>Vytvořit blok</Tool>
            </Col>
          </GroupBody>
          <Label>Rozvržení</Label>
        </Group>
        <Group $w={78}>
          <GroupBody $pad={6}>
            <Col $w={70}>
              <Tool icon={<IImage />}>Obrázek</Tool>
              <Tool icon={<IPoints />}>Body</Tool>
              <Tool icon={<IAcad />}>Acad</Tool>
            </Col>
          </GroupBody>
          <Label>Vložení</Label>
        </Group>
        <Group $w={195}>
          <GroupBody $pad={4}>
            <Col $w={98}>
              <Tool icon={<IConstr />} iconW={21} gap={5}>Konstrukční</Tool>
              <Small><Toggle $w={50} $gap={5}><SmallIcon $w={20}><IOsa /></SmallIcon>Osa</Toggle></Small>
            </Col>
            <Col $w={92}>
              <Small><Toggle $w={57} $gap={3}><SmallIcon $w={22}><ICenter /></SmallIcon>Střed</Toggle></Small>
              <Tool icon={<IDriven />} iconW={22} gap={3}>Řízená kóta</Tool>
            </Col>
          </GroupBody>
          <Label caret>Formát</Label>
        </Group>
        <Group $w={58}>
          <GroupBody>
            <LargeTool w={57} icon={<ICheck />}>Dokončit<br />náčrt</LargeTool>
          </GroupBody>
          <Label end>Konec</Label>
        </Group>
        <RibbonRest />
      </Ribbon>
      <Work>
        <Panel>
          <Grip><GripLines /><PanelClose>✕</PanelClose></Grip>
          <PanelHead>Model<Caret $s={4} $c="#fff" /><HelpTag>
            <svg width="14" height="16"><path d="M1 1H13V13H8L5 15V13H1Z" fill="#fff36b" stroke="#222" /><text x="7" y="11" textAnchor="middle" fontFamily="Liberation Sans" fontWeight="bold" fontSize="10" fill="#223">?</text></svg>
          </HelpTag></PanelHead>
          <PanelTools>
            <svg width="15" height="14"><path d="M1 1H14L9 7V13H6V7Z" fill="#777" stroke="#222" /></svg>
            <ToolSep />
            <IBino c="#111" />
          </PanelTools>
          <Tree>
            <TreeLines />
            <TreeRow $lvl={0}><TreeIcon><TCube /></TreeIcon>Součást2</TreeRow>
            <TreeRow $lvl={1}><Plus $plus /><TreeIcon><TView /></TreeIcon>Pohled: Master</TreeRow>
            <TreeRow $lvl={1}><Plus /><TreeIcon><TFolder /></TreeIcon>Počátek</TreeRow>
            {treeRows.map(([l, ic, t]) => <TreeRow key={t} $lvl={l}><TreeIcon>{ic}</TreeIcon>{t}</TreeRow>)}
            <TreeRow $lvl={1} $white><TreeIcon><TSketch /></TreeIcon>Náčrt1</TreeRow>
            <TreeRow $lvl={1}><TreeIcon><TEnd /></TreeIcon>Konec součásti</TreeRow>
          </Tree>
        </Panel>
        <ViewCol>
          <Canvas>
            <DrawSketch />
            <DocControls>
              <svg width="12" height="8"><path d="M1 5H11" stroke="#ddd" strokeWidth="2" /></svg>
              <svg width="10" height="11"><path d="M3 2.500V1H9.500V8H8M1 3.500H7V10H1Z" stroke="#ddd" strokeWidth="1.300" fill="none" /></svg>
              <svg width="10" height="10"><path d="M1 1L9 9M9 1L1 9" stroke="#ddd" strokeWidth="2" /></svg>
            </DocControls>
            <ViewCube><CubeFace>SHORA</CubeFace></ViewCube>
          </Canvas>
          <DocTabs>
            <DocBtn><svg width="14" height="14"><path d="M1 1H9V3H3V9H1Z" fill="#bbb" stroke="#333" /><rect x="4" y="4" width="9" height="9" fill="#ddd" stroke="#333" /></svg></DocBtn>
            <DocBtn><svg width="14" height="14" fill="#ccc" stroke="#333"><rect x="1" y="1" width="5" height="5" /><rect x="8" y="1" width="5" height="5" /><rect x="1" y="8" width="5" height="5" /><rect x="8" y="8" width="5" height="5" /></svg></DocBtn>
            <DocBtn><svg width="10" height="6"><path d="M5 0L10 6H0Z" fill="#333" /></svg></DocBtn>
            <DocTab $w={85} $ml={1}>GC-14-1.idw</DocTab>
            <DocTab $w={70}>GC-14.ipt</DocTab>
            <DocTab $w={78} $active>Součást2
              <svg width="9" height="9"><rect x=".5" y=".5" width="8" height="8" fill="#f4f4f4" stroke="#aaa" /><path d="M2.500 2.500L6.500 6.500M6.500 2.500L2.500 6.500" stroke="#777" /></svg>
            </DocTab>
          </DocTabs>
        </ViewCol>
      </Work>
      <StatusBar>
        <StatusText>Vyberte geometrii pro kótování</StatusText>
        <StatusIcon $on><svg width="18" height="18"><path d="M1 1H12V12H1ZM1 5H12M1 9H12M5 1V12M9 1V12" stroke="#444" fill="#fff" /><path d="M9 16V12a3.500 3.500 0 0 1 7 0V16" stroke="#c22" strokeWidth="2" fill="none" /></svg></StatusIcon>
        <StatusIcon $w={25}><svg width="18" height="18"><rect x="1" y="2" width="13" height="9" fill="#fff" stroke="#444" /><path d="M4 6l2 2 4-4" stroke="#c22" /><circle cx="14" cy="11" r="2" fill="#f0b030" /><rect x="13" y="13" width="2" height="4" fill="#999" /></svg></StatusIcon>
        <StatusIcon $w={37}><svg width="20" height="18"><path d="M3 4H8M5.500 1.500V6.500M9 7L11 1M12 4H17" stroke="#222" /><path d="M1 10V17M17 10V17M1 13H17" stroke="#333" /></svg><Caret $s={2.5} $c="#444" /></StatusIcon>
        <StatusIcon $w={23}><svg width="16" height="18"><path d="M1 8L6 4H11V14H1Z" fill="#eee" stroke="#333" /><path d="M9 8L15 1V11L9 17Z" fill="#a8c8ea" stroke="#2a72c0" /></svg></StatusIcon>
        <StatusIcon $w={22}><svg width="16" height="18"><path d="M6 0V10M1 5H11M6 0L4 2H8ZM6 10L4 8H8ZM1 5L3 3V7ZM11 5L9 3V7Z" stroke="#222" fill="#222" /><circle cx="11" cy="11" r="2" fill="#f0b030" /><rect x="10" y="13" width="2" height="4" fill="#999" /></svg></StatusIcon>
        <Field $first $w={118}>0,000 mm, 0,000 mm</Field>
        <Field $w={121}>Potřebný počet kót: 2</Field>
        <Field $w={38} $pad={7}>1</Field>
        <Field $w={39} $pad={7}>3</Field>
      </StatusBar>
      <Taskbar>
        <TaskCell $w={48}>
          <svg width="27" height="27"><path d="M1 4L12 2.500V13H1ZM14 2.200L26 .5V13H14ZM1 15H12V25.500L1 24ZM14 15H26V26.500L14 24.800Z" fill="#fff" /></svg>
        </TaskCell>
        <TaskCell>
          <svg width="30" height="32"><path d="M2 6H12L14 3H26V10H2Z" fill="#f4e6a8" stroke="#c8a850" /><path d="M6 2h4v4H6zM14 3h4v4h-4z" fill="#d04030" /><path d="M1 9H29V29H1Z" fill="#f7e8a8" stroke="#c8a850" /><path d="M8 31V22Q15 16 23 22V31H19V25H12V31Z" fill="#5fb4e8" /></svg>
        </TaskCell>
        <TaskCell>
          <svg width="30" height="30"><rect width="30" height="30" fill="#0a8a22" /><path d="M6 9H24V26H6Z" fill="#fff" /><path d="M10.500 9V6a4.500 4.500 0 0 1 9 0V9" stroke="#fff" strokeWidth="1.500" fill="none" /><path d="M9.500 12.500h5v5h-5zM15.500 12.500h5v5h-5zM9.500 18.500h5v5h-5zM15.500 18.500h5v5h-5z" fill="#0a8a22" /></svg>
        </TaskCell>
        <TaskCell $hl>
          <svg width="32" height="32"><circle cx="16" cy="16" r="15" fill="#e66a1a" /><circle cx="17" cy="13" r="10" fill="#3a5fa8" /><path d="M3 20C6 30 22 34 29 20C25 26 14 27 11 20C9 15 11 10 15 8C9 7 4 11 3 20Z" fill="#f2a22a" /><path d="M6 5C4 8 4 11 3 14L9 9Z" fill="#f8c83a" /></svg>
        </TaskCell>
        <TaskCell>
          <svg width="34" height="36"><defs><linearGradient id="gapp" x1="0" x2="1"><stop offset="0" stopColor="#2e9c5c" /><stop offset="1" stopColor="#e8f3ea" /></linearGradient></defs><rect width="34" height="36" fill="url(#gapp)" /><path d="M12 2H18L26 16L18 32H12Z" fill="#0d3a20" /></svg>
        </TaskCell>
        <TaskCell>
          <svg width="30" height="32"><path d="M0 4L17 0V32L0 28Z" fill="#0f6fc6" /><rect x="17" y="8" width="13" height="15" fill="#fff" stroke="#0f6fc6" /><path d="M18 10L23 16L29 9" stroke="#0f6fc6" strokeWidth="1.500" fill="none" /><ellipse cx="8" cy="16" rx="4" ry="5" stroke="#fff" strokeWidth="2.500" fill="none" /></svg>
        </TaskCell>
        <TaskCell $active>
          <InvBadge>
            <svg width="24" height="26"><path d="M4 2H20L18 7H15V19H18L20 24H4L6 19H9V7H6Z" fill="#7a3a14" /></svg>
            <InvLT>LT</InvLT>
          </InvBadge>
        </TaskCell>
        <TaskCell $hl $w={58}>
          <IE>
            <IERing width="34" height="34"><path d="M3 30C9 34 32 12 30 5C28 0 14 3 7 10" stroke="#f2c530" strokeWidth="2" fill="none" /></IERing>
            <IELetter>e</IELetter>
          </IE>
        </TaskCell>
        <Tray>
          <svg width="10" height="6"><path d="M5 0L10 6H0Z" fill="#fff" /></svg>
          <svg width="16" height="16" style={{ marginLeft: 5 }}><path d="M2 0V16M2 1H10L8 4H15L13 9H2" stroke="#fff" fill="none" /></svg>
          <svg width="16" height="16"><rect x="2" y="3" width="13" height="8" fill="none" stroke="#fff" /><rect x="1" y="1" width="5" height="6" fill="#fff" /><path d="M8 11V14H4V15H12V14H8" stroke="#fff" /></svg>
          <svg width="16" height="16"><path d="M1 5H4L8 2V14L4 11H1Z" fill="#fff" /><path d="M10 5a4 4 0 0 1 0 6M12 3a7 7 0 0 1 0 10" stroke="#fff" fill="none" /></svg>
          <Clock>14:07<br />19. 12. 2014</Clock>
        </Tray>
      </Taskbar>
    </Root>
  );
}
